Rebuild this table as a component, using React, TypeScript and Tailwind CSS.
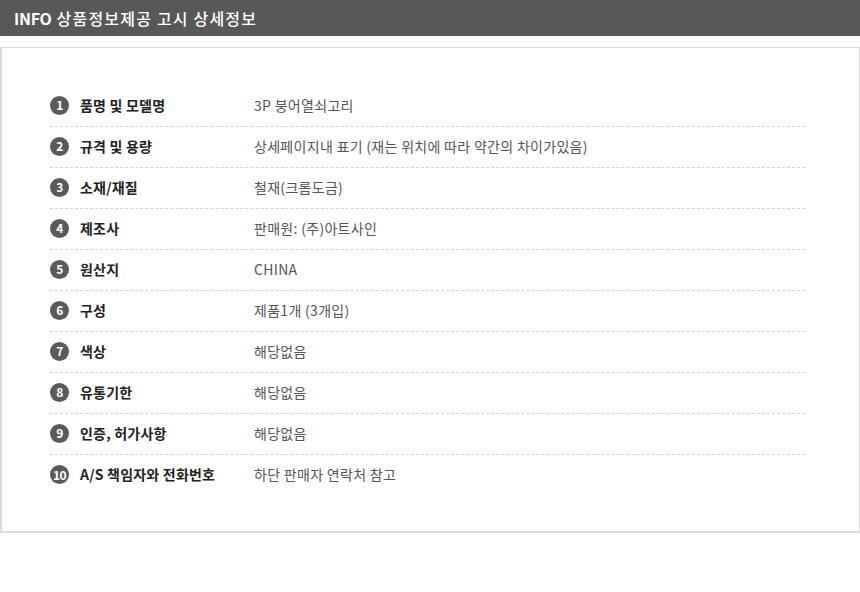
const rows: [string, string][] = [
  ['품명 및 모델명', '3P 붕어열쇠고리'],
  ['규격 및 용량', '상세페이지내 표기 (재는 위치에 따라 약간의 차이가있음)'],
  ['소재/재질', '철재(크롬도금)'],
  ['제조사', '판매원: (주)아트사인'],
  ['원산지', 'CHINA'],
  ['구성', '제품1개 (3개입)'],
  ['색상', '해당없음'],
  ['유통기한', '해당없음'],
  ['인증, 허가사항', '해당없음'],
  ['A/S 책임자와 전화번호', '하단 판매자 연락처 참고'],
];

export default function App() {
  return (
    <div
      className="w-[860px] h-[592px] bg-white"
      style={{ fontFamily: '"Noto Sans CJK KR", "Noto Sans", sans-serif' }}
    >
      {/* Title bar */}
      <div className="h-[36px] bg-[#585858] flex items-center pl-[14px] text-white text-[16px] font-medium tracking-[1.2px]">
        <span className="font-bold mr-[5px] tracking-[-0.3px]">INFO</span>
        <span>상품정보제공 고시 상세정보</span>
      </div>

      {/* Info box */}
      <div className="mt-[11px] h-[486px] border border-[#dcdcdc] border-l-2 border-b-2 pl-[48px] pr-[54px] pt-[38px]">
        {rows.map(([label, value], i) => (
          <div
            key={i}
            className={`h-[41px] pb-[2px] flex items-center ${
              i < rows.length - 1 ? 'border-b border-dashed border-[#d4d4d4]' : ''
            }`}
          >
            <div className="w-[19px] h-[19px] rounded-full bg-[#5a5a5a] text-white flex items-center justify-center text-[12px] font-bold leading-none tracking-[-0.5px]">
              {i + 1}
            </div>
            <div className="w-[185px] pl-[11px] text-[14px] font-bold text-[#222] tracking-[0.2px]">
              {label}
            </div>
            <div className="text-[14px] text-[#555] tracking-[0.3px]">{value}</div>
          </div>
        ))}
      </div>
    </div>
  );
}
